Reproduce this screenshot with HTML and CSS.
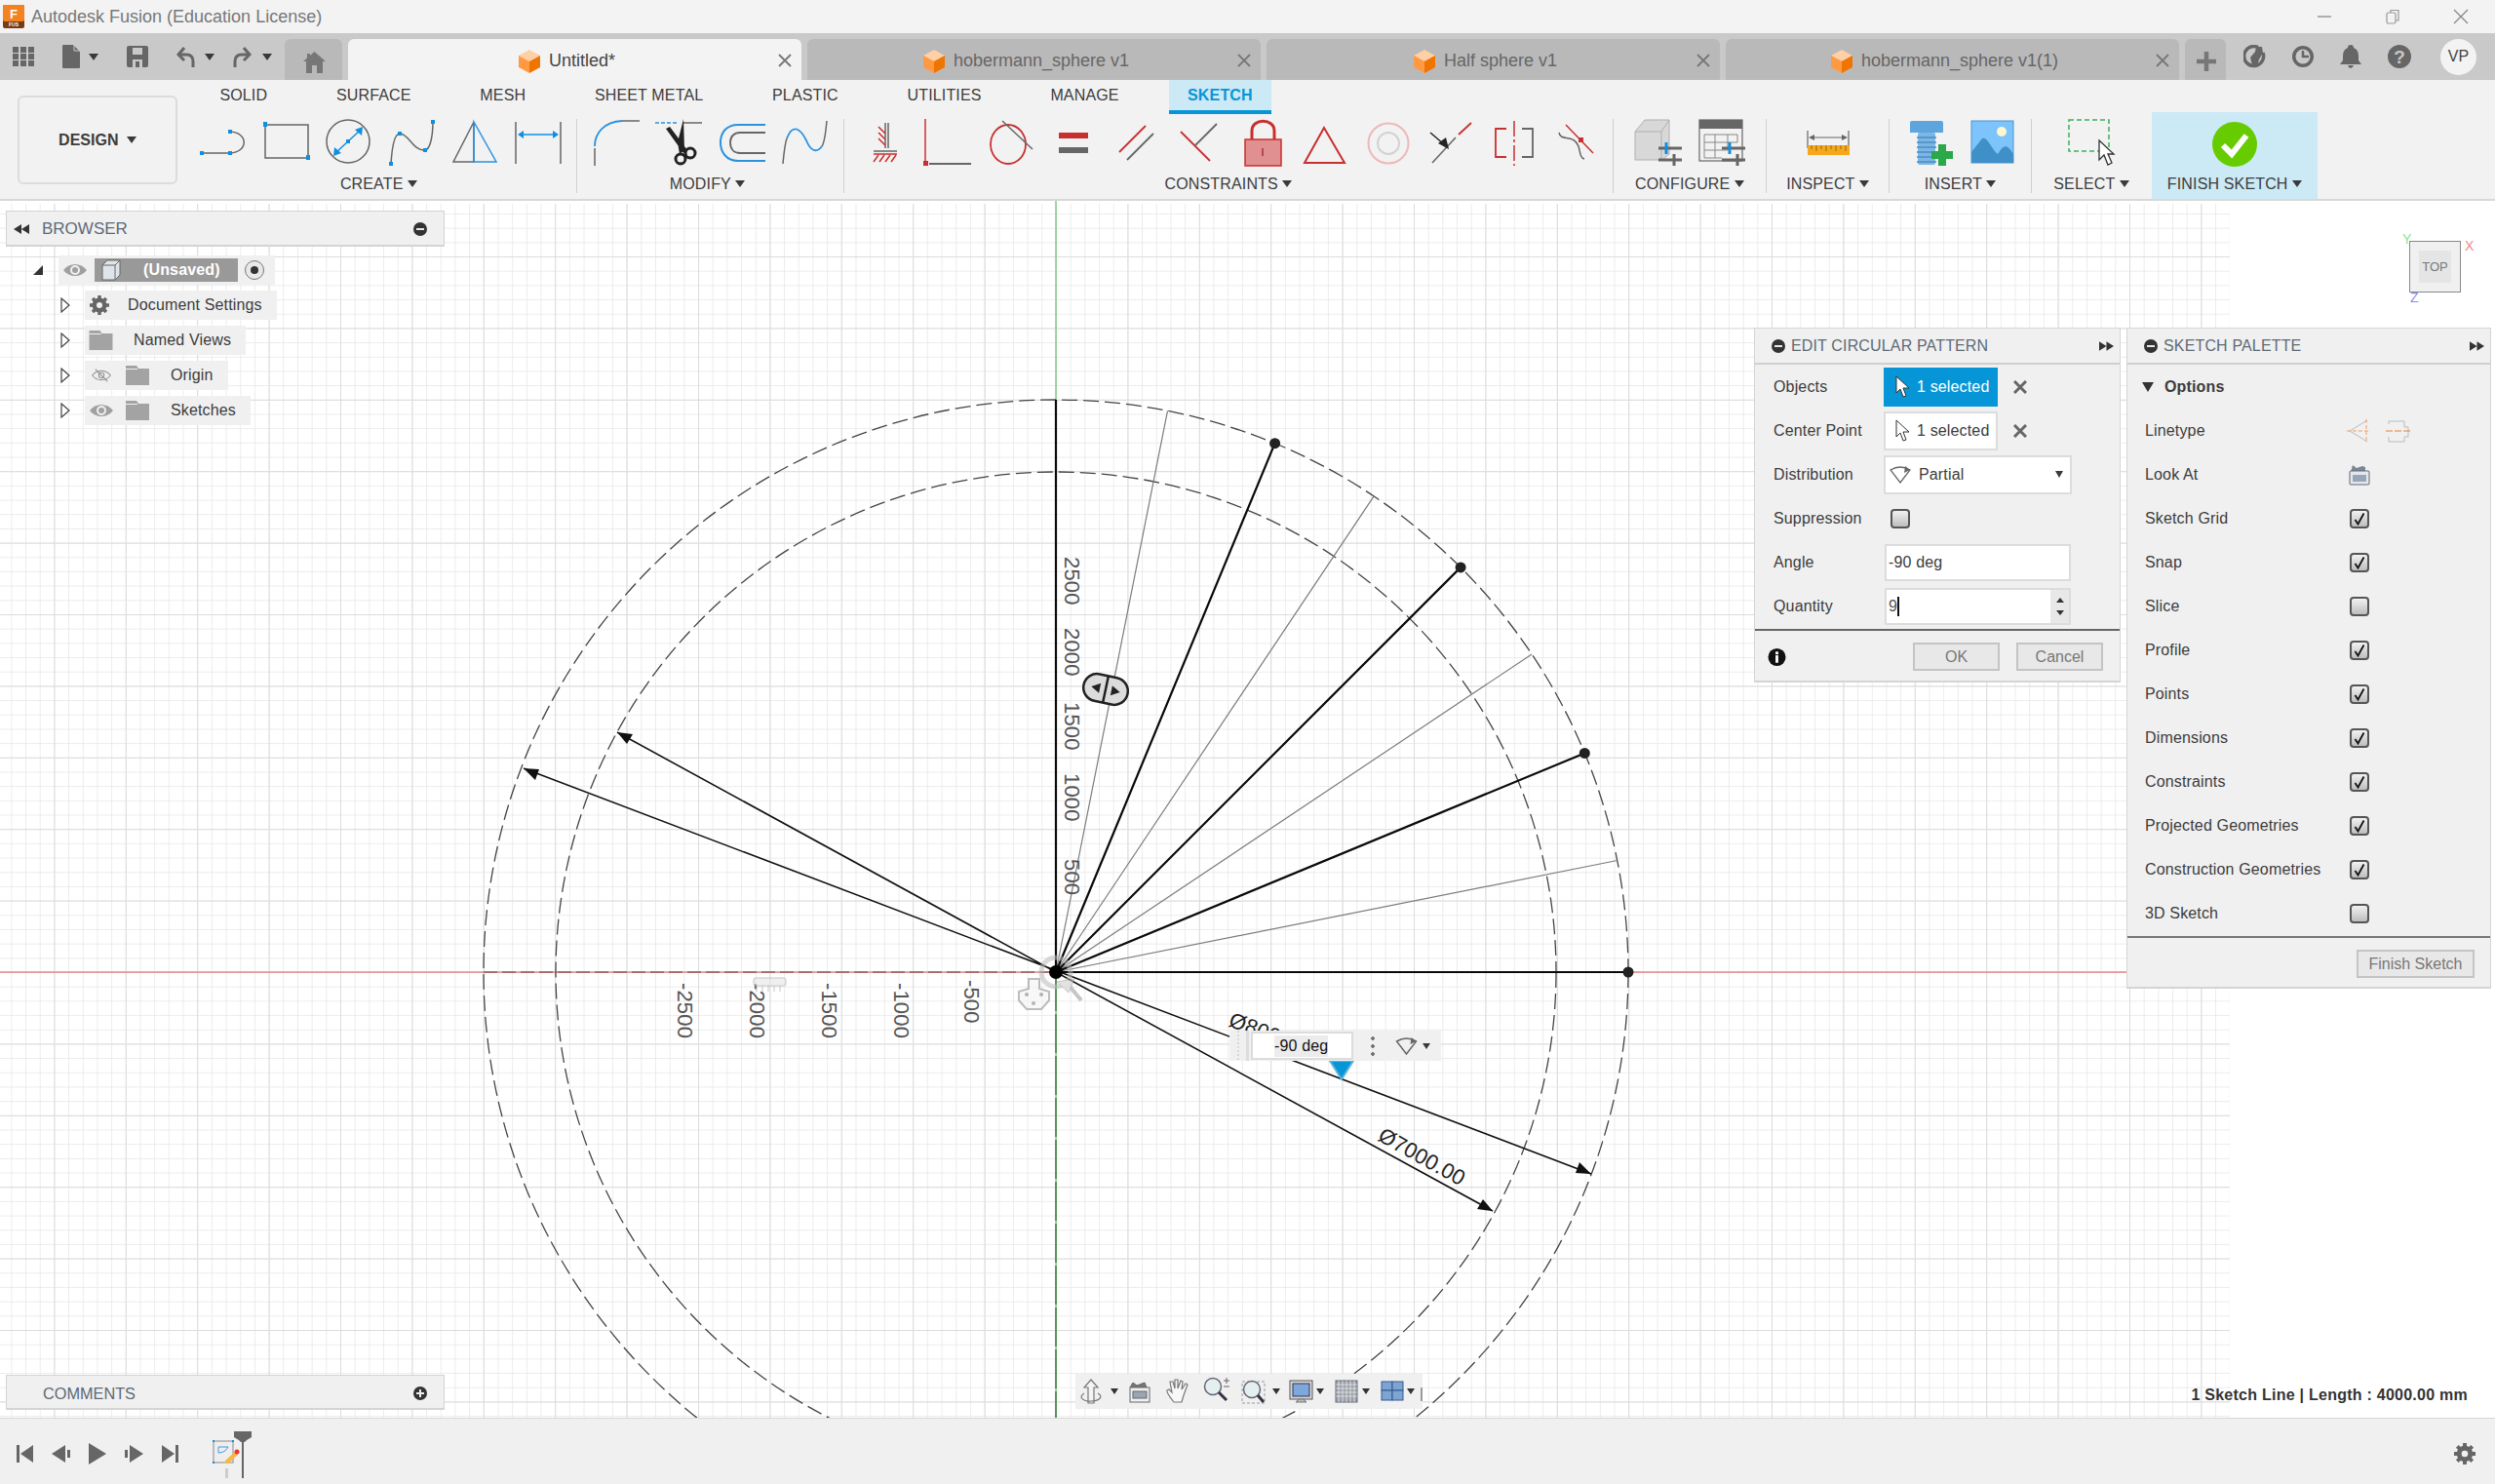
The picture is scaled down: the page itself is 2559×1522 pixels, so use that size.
FILE: index.html
```html
<!DOCTYPE html>
<html lang="en">
<head>
<meta charset="utf-8">
<title>Autodesk Fusion (Education License)</title>
<link rel="stylesheet" href="styles.css">
</head>
<body>
<svg class="defs" aria-hidden="true">
  <symbol id="cube" viewBox="0 0 22 24"><polygon points="11,0 22,6 11,12 0,6" fill="#ffcfa6"/><polygon points="0,6 11,12 11,24 0,18" fill="#ff9a42"/><polygon points="22,6 11,12 11,24 22,18" fill="#f07400"/></symbol>
  <symbol id="eye" viewBox="0 0 24 14"><path d="M0 7C6 -1 18 -1 24 7C18 15 6 15 0 7Z" fill="#a0a0a0"/><circle cx="12" cy="7" r="5" fill="#f0f0f0"/><circle cx="12" cy="7" r="3" fill="#a0a0a0"/></symbol>
  <symbol id="folder" viewBox="0 0 24 20"><path d="M0 0H11L13 3H24V20H0Z" fill="#a3a3a3"/><path d="M0 3.5H12" stroke="#f0f0f0" stroke-width="1"/></symbol>
  <symbol id="caret" viewBox="0 0 10 16"><path d="M1 1L9 8L1 15Z" fill="#fff" stroke="#444" stroke-width="1.2"/></symbol>
  <symbol id="cursor" viewBox="0 0 16 24"><path d="M2 1V18L6 14L9 22L12 21L9 13H15Z" fill="currentColor" stroke="#333" stroke-width="1"/></symbol>
  <symbol id="dblright" viewBox="0 0 16 12"><path d="M0 1L8 6L0 11ZM8 1L16 6L8 11Z" fill="#333"/></symbol>
  <symbol id="check" viewBox="0 0 14 14"><path d="M2.500 8L5.500 12.500L11.500 1.500" fill="none" stroke="#111" stroke-width="1.800"/></symbol>
  <symbol id="minusc" viewBox="0 0 14 14"><circle cx="7" cy="7" r="7" fill="#333"/><rect x="3" y="6" width="8" height="2" fill="#e8e8e8"/></symbol>
  <symbol id="sliders" viewBox="0 0 24 24"><path d="M0 6H24M0 18H24" stroke="#666" stroke-width="3"/><path d="M8 0V12" stroke="#0f8fe0" stroke-width="3"/><path d="M16 12V24" stroke="#666" stroke-width="3"/></symbol>
</svg>

<header class="titlebar">
  <svg class="appicon" viewBox="0 0 22 24"><rect width="22" height="24" rx="2" fill="#7a3b10"/><rect width="22" height="17" rx="2" fill="#f58220"/><text x="11" y="14" class="appicon-f">F</text><text x="11" y="22" class="appicon-s">FUS</text></svg>
  <span class="apptitle">Autodesk Fusion (Education License)</span>
  <div class="winctl">
    <svg width="16" height="16" viewBox="0 0 16 16"><path d="M1 8H15" stroke="#999" stroke-width="1.500"/></svg>
    <svg width="16" height="16" viewBox="0 0 16 16"><rect x="2" y="4" width="9" height="11" rx="1.500" fill="none" stroke="#999" stroke-width="1.200"/><path d="M6 4V1.500H14V12H11" fill="none" stroke="#999" stroke-width="1.200"/></svg>
    <svg width="16" height="16" viewBox="0 0 16 16"><path d="M1 1L15 15M15 1L1 15" stroke="#888" stroke-width="1.300"/></svg>
  </div>
</header>

<nav class="tabbar">
  <div class="qat">
    <svg class="qat-grid" width="22" height="20" viewBox="0 0 22 20"><path fill="#666" d="M0 0h6v6H0zM8 0h6v6H8zM16 0h6v6h-6zM0 7h6v6H0zM8 7h6v6H8zM16 7h6v6h-6zM0 14h6v6H0zM8 14h6v6H8zM16 14h6v6h-6z"/></svg>
    <svg class="qat-file" width="18" height="24" viewBox="0 0 18 24"><path fill="#666" d="M1 0H11L18 7V23Q18 24 17 24H1Q0 24 0 23V1Q0 0 1 0Z"/><path d="M12 0V6H18" fill="none" stroke="#c9c9c9" stroke-width="1"/></svg>
    <i class="tri qat-tri1"></i>
    <svg class="qat-save" width="22" height="22" viewBox="0 0 22 22"><path fill="#666" d="M2 0H20Q22 0 22 2V20Q22 22 20 22H2Q0 22 0 20V2Q0 0 2 0Z"/><path fill="#c9c9c9" d="M6 2H16V9H6ZM6 14H16V22H6Z"/><rect x="9" y="16" width="4" height="6" fill="#666"/></svg>
    <svg class="qat-undo" width="19" height="22" viewBox="0 0 19 22"><path d="M8 2L2 9L8 15" fill="none" stroke="#666" stroke-width="3"/><path d="M3 9H10Q17 9 17 16V22" fill="none" stroke="#666" stroke-width="3"/></svg>
    <i class="tri qat-tri2"></i>
    <svg class="qat-redo" width="19" height="22" viewBox="0 0 19 22"><path d="M11 2L17 9L11 15" fill="none" stroke="#666" stroke-width="3"/><path d="M16 9H9Q2 9 2 16V22" fill="none" stroke="#666" stroke-width="3"/></svg>
    <i class="tri qat-tri3"></i>
  </div>
  <div class="hometab"><svg width="23" height="22" viewBox="0 0 23 22"><path fill="#777" d="M11.500 0L23 10H20V22H14V14H9V22H3V10H0L4 6.500V2H7V4Z"/></svg></div>
  <div class="doctab active"><svg class="tabcube"><use href="#cube"/></svg><span class="doctab-name">Untitled*</span><svg class="tabclose" viewBox="0 0 14 14"><path d="M1 1L13 13M13 1L1 13" stroke="#777" stroke-width="1.800"/></svg></div>
  <div class="doctab"><svg class="tabcube"><use href="#cube"/></svg><span class="doctab-name">hobermann_sphere v1</span><svg class="tabclose" viewBox="0 0 14 14"><path d="M1 1L13 13M13 1L1 13" stroke="#777" stroke-width="1.800"/></svg></div>
  <div class="doctab"><svg class="tabcube"><use href="#cube"/></svg><span class="doctab-name">Half sphere v1</span><svg class="tabclose" viewBox="0 0 14 14"><path d="M1 1L13 13M13 1L1 13" stroke="#777" stroke-width="1.800"/></svg></div>
  <div class="doctab"><svg class="tabcube"><use href="#cube"/></svg><span class="doctab-name">hobermann_sphere v1(1)</span><svg class="tabclose" viewBox="0 0 14 14"><path d="M1 1L13 13M13 1L1 13" stroke="#777" stroke-width="1.800"/></svg></div>
  <div class="plustab"><svg width="20" height="20" viewBox="0 0 20 20"><path d="M10 0V20M0 10H20" stroke="#777" stroke-width="4.500"/></svg></div>
  <div class="tabtools">
    <svg width="24" height="24" viewBox="0 0 24 24"><path d="M15 2.500A10 10 0 1 0 20 8" fill="none" stroke="#666" stroke-width="3.500"/><path d="M7 13L12 7L13 2L19 2L20 8L16 15L14 22L9 21Z" fill="#666"/></svg>
    <svg width="24" height="24" viewBox="0 0 24 24"><circle cx="12" cy="12" r="11" fill="#666"/><circle cx="12" cy="12" r="7.500" fill="#c9c9c9"/><path d="M12 6V12H18" fill="none" stroke="#666" stroke-width="2.500"/></svg>
    <svg width="22" height="24" viewBox="0 0 22 24"><path fill="#666" d="M11 0Q14 0 14 3Q19 5 19 11V16L22 20H0L3 16V11Q3 5 8 3Q8 0 11 0ZM8 21H14Q13 24 11 24Q9 24 8 21Z"/></svg>
    <svg width="24" height="24" viewBox="0 0 24 24"><circle cx="12" cy="12" r="12" fill="#666"/><text x="12" y="19" class="helpq">?</text></svg>
    <span class="avatar">VP</span>
  </div>
</nav>

<section class="toolbar">
  <button class="designbtn">DESIGN <i class="tri"></i></button>
  <div class="toolcol">
    <div class="wstabs">
      <span class="wstab">SOLID</span><span class="wstab">SURFACE</span><span class="wstab">MESH</span><span class="wstab">SHEET METAL</span><span class="wstab">PLASTIC</span><span class="wstab">UTILITIES</span><span class="wstab">MANAGE</span><span class="wstab current">SKETCH</span>
    </div>
    <div class="groups">
      <div class="group g-create">
        <div class="icons">
          <svg class="ti" viewBox="0 0 48 48"><path d="M2 35H31M31 13C50 14 50 34 31 35" fill="none" stroke="#666" stroke-width="1.500"/><path d="M0 33h4v4H0zM29 33h4v4h-4zM29 11h4v4h-4z" fill="#0f8fe0"/></svg>
          <svg class="ti" viewBox="0 0 48 48"><rect x="2" y="6" width="44" height="34" fill="none" stroke="#666" stroke-width="1.500"/><path d="M0 3h4v5H0zM44 37h4v5h-4z" fill="#0f8fe0"/></svg>
          <svg class="ti" viewBox="0 0 48 48"><ellipse cx="23" cy="23" rx="22" ry="22" fill="none" stroke="#666" stroke-width="1.500"/><path d="M10 35L36 11" stroke="#0f8fe0" stroke-width="1.500"/><path d="M8 38L9 29L16 35ZM38 8L37 17L30 11Z" fill="#0f8fe0"/><rect x="21" y="21" width="4" height="4" fill="#0f8fe0"/></svg>
          <svg class="ti" viewBox="0 0 48 48"><path d="M2 46C3 30 5 15 11 15C20 15 25 33 37 32C43 31 45 15 45 2" fill="none" stroke="#666" stroke-width="1.500"/><path d="M0 44h4v4H0zM9 13h4v4H9zM35 30h4v4h-4zM43 1h4v4h-4z" fill="#0f8fe0"/></svg>
          <svg class="ti" viewBox="0 0 48 48"><path d="M23 3V44H2Z" fill="none" stroke="#666" stroke-width="1.500"/><path d="M23 3V44H46Z" fill="none" stroke="#2b92e0" stroke-width="1.500"/></svg>
          <svg class="ti" viewBox="0 0 48 48"><path d="M1 3V46M47 3V46" stroke="#666" stroke-width="1.500"/><path d="M6 16H42" stroke="#0f8fe0" stroke-width="1.500"/><path d="M3 16L9 12V20ZM45 16L39 12V20Z" fill="#0f8fe0"/></svg>
        </div>
        <div class="glabel pull">CREATE <i class="tri"></i></div>
      </div>
      <div class="group g-modify">
        <div class="icons">
          <svg class="ti" viewBox="0 0 48 48"><path d="M2 48V30M30 2H48" stroke="#666" stroke-width="1.500" fill="none"/><path d="M2 28C2 14 12 3 30 2" fill="none" stroke="#2b92e0" stroke-width="1.800"/></svg>
          <svg class="ti" viewBox="0 0 48 48"><path d="M0 4H24" stroke="#2b92e0" stroke-width="1.500" stroke-dasharray="4 2"/><path d="M28 4H48" stroke="#666" stroke-width="1.500"/><path d="M11 10L15 8L33 32L29 35ZM29 0L30 32L25 36L23 24Z" fill="#222"/><circle cx="26" cy="41" r="5" fill="none" stroke="#222" stroke-width="3"/><circle cx="36" cy="35" r="5" fill="none" stroke="#222" stroke-width="3"/></svg>
          <svg class="ti" viewBox="0 0 48 48"><path d="M48 6H20C8 6 2 14 2 24C2 34 8 43 20 43H48" fill="none" stroke="#2b92e0" stroke-width="2"/><path d="M48 14H22C16 14 12 18 12 24C12 31 16 35 22 35H48" fill="none" stroke="#666" stroke-width="1.800"/></svg>
          <svg class="ti" viewBox="0 0 48 48"><path d="M2 46C3 35 4 25 6 20M42 28C45 24 46 12 47 2" fill="none" stroke="#666" stroke-width="1.500"/><path d="M6 20C12 4 20 10 26 22C30 32 36 36 42 28" fill="none" stroke="#2b92e0" stroke-width="1.800"/></svg>
        </div>
        <div class="glabel pull-m">MODIFY <i class="tri"></i></div>
      </div>
      <div class="group g-constraints">
        <div class="icons wide">
          <svg class="ti" viewBox="0 0 48 48"><path d="M24 4V30M27 4V30M12 33H36" stroke="#666" stroke-width="1.500"/><path d="M12 36H36M17 8L24 15M17 14L24 21M17 20L24 27M17 37L12 44M23 37L18 44M29 37L24 44M35 37L30 44" stroke="#c8302f" stroke-width="1.500"/></svg>
          <svg class="ti" viewBox="0 0 48 48"><path d="M1 0V44" stroke="#c8302f" stroke-width="1.500"/><path d="M5 46H48" stroke="#666" stroke-width="2"/><rect x="-1" y="43" width="5" height="5" fill="#c8302f"/></svg>
          <svg class="ti" viewBox="0 0 48 48"><ellipse cx="21" cy="26" rx="18" ry="20" fill="none" stroke="#c8302f" stroke-width="1.800"/><path d="M15 2L46 31" stroke="#666" stroke-width="1.500"/></svg>
          <svg class="ti" viewBox="0 0 48 48"><rect x="9" y="14" width="30" height="6" fill="#c8302f"/><rect x="9" y="29" width="30" height="6" fill="#666"/></svg>
          <svg class="ti" viewBox="0 0 48 48"><path d="M33 7L6 34" stroke="#c8302f" stroke-width="1.800"/><path d="M41 15L14 42" stroke="#666" stroke-width="1.800"/></svg>
          <svg class="ti" viewBox="0 0 48 48"><path d="M5 13L35 43" stroke="#c8302f" stroke-width="1.800"/><path d="M42 5L20 27" stroke="#666" stroke-width="1.800"/></svg>
          <svg class="ti" viewBox="0 0 48 48"><path d="M13 22V12C13 -1 36 -1 36 12V22" fill="none" stroke="#c8302f" stroke-width="3"/><rect x="6" y="21" width="37" height="27" fill="#e09090" stroke="#c8302f" stroke-width="1.500"/><path d="M24 30V38" stroke="#a33" stroke-width="1.500"/></svg>
          <svg class="ti" viewBox="0 0 48 48"><path d="M23 9L44 45H3Z" fill="none" stroke="#c8302f" stroke-width="2"/></svg>
          <svg class="ti" viewBox="0 0 48 48"><circle cx="24" cy="25" r="20.500" fill="none" stroke="#eeb8b8" stroke-width="2"/><circle cx="24" cy="25" r="11" fill="none" stroke="#d2d2d2" stroke-width="2"/></svg>
          <svg class="ti" viewBox="0 0 48 48"><path d="M5 45L29 19" stroke="#666" stroke-width="1.500"/><path d="M32 16L45 4" stroke="#c8302f" stroke-width="1.800"/><path d="M3 14L17 26" stroke="#222" stroke-width="1.500"/><path d="M22 31L11 25L19 19Z" fill="#222"/></svg>
          <svg class="ti" viewBox="0 0 48 48"><path d="M24 2V48" stroke="#c8302f" stroke-width="1.500" stroke-dasharray="16 3 3 3"/><path d="M16 10H5V39H16" fill="none" stroke="#c8302f" stroke-width="1.800"/><path d="M32 10H43V39H32" fill="none" stroke="#666" stroke-width="1.800"/></svg>
          <svg class="ti" viewBox="0 0 48 48"><path d="M13 6L41 35" stroke="#c8302f" stroke-width="1.500"/><path d="M6 14C8 24 20 14 26 28C28 36 28 40 32 41" fill="none" stroke="#666" stroke-width="1.500"/><rect x="26" y="19" width="5" height="5" fill="#c8302f"/></svg>
        </div>
        <div class="glabel">CONSTRAINTS <i class="tri"></i></div>
      </div>
      <div class="group g-configure">
        <div class="icons">
          <svg class="ti" viewBox="0 0 48 48"><path d="M0 13L10 1H35V36L28 42H0Z" fill="#d8d8d8" stroke="#b0b0b0"/><path d="M0 13H27L35 1M27 13V42" fill="none" stroke="#b0b0b0"/><use href="#sliders" x="24" y="24" width="24" height="24"/></svg>
          <svg class="ti" viewBox="0 0 48 48"><rect x="1" y="1" width="44" height="42" fill="#f2f2f2" stroke="#666" stroke-width="1.200"/><rect x="1" y="1" width="44" height="9" fill="#666"/><path d="M6 16H40M6 24H40M6 32H30M6 40H24M6 16V40M17 16V40M30 16V32M40 16V24" stroke="#888" stroke-width="1" fill="none"/><use href="#sliders" x="24" y="24" width="24" height="24"/></svg>
        </div>
        <div class="glabel">CONFIGURE <i class="tri"></i></div>
      </div>
      <div class="group g-inspect">
        <div class="icons">
          <svg class="ti" viewBox="0 0 48 48"><path d="M3 12V30M45 12V30" stroke="#666" stroke-width="1.200"/><path d="M6 19H42" stroke="#666" stroke-width="1.200"/><path d="M4 19L10 16V22ZM44 19L38 16V22Z" fill="#666"/><rect x="3" y="27" width="43" height="10" fill="#f5a81c"/><path d="M7 27V31M12 27V33M17 27V31M22 27V33M27 27V31M32 27V33M37 27V31M42 27V33" stroke="#9a6a10"/></svg>
        </div>
        <div class="glabel">INSPECT <i class="tri"></i></div>
      </div>
      <div class="group g-insert">
        <div class="icons">
          <svg class="ti" viewBox="0 0 48 48"><path d="M4 2H34Q36 2 36 4V14H2V4Q2 2 4 2Z" fill="#5da5dc"/><rect x="10" y="14" width="18" height="33" rx="2" fill="#7cb6e4"/><path d="M9 19H29M9 24H29M9 29H29M9 34H29M9 39H29M9 44H29" stroke="#4a8fc4" stroke-width="1.500"/><path d="M31 26H39V33H46V41H39V48H31V41H24V33H31Z" fill="#2aa84a"/></svg>
          <svg class="ti" viewBox="0 0 48 48"><rect x="3" y="2" width="43" height="43" fill="#7cc4fb" stroke="#4a94d0"/><path d="M3 34L14 20C20 18 24 32 30 36C34 30 38 22 46 36V45H3Z" fill="#3f8fc9"/><ellipse cx="34" cy="13" rx="5" ry="5" fill="#fdf8d0"/></svg>
        </div>
        <div class="glabel">INSERT <i class="tri"></i></div>
      </div>
      <div class="group g-select">
        <div class="icons">
          <svg class="ti" viewBox="0 0 48 48"><rect x="1" y="1" width="41" height="32" fill="none" stroke="#3fae5a" stroke-width="1.500" stroke-dasharray="5 3"/><path d="M32 22V42L37 37L41 47L45 45L41 36H47Z" fill="#fff" stroke="#333" stroke-width="1.300"/></svg>
        </div>
        <div class="glabel">SELECT <i class="tri"></i></div>
      </div>
      <div class="group g-finish">
        <div class="icons">
          <svg class="ti" viewBox="0 0 48 48"><circle cx="24" cy="24" r="23" fill="#66cc00"/><path d="M12 25L21 34L36 15" fill="none" stroke="#fff" stroke-width="6"/></svg>
        </div>
        <div class="glabel">FINISH SKETCH <i class="tri"></i></div>
      </div>
    </div>
  </div>
</section>

<main class="canvas">
  <svg class="scene" viewBox="0 206 2559 1248" preserveAspectRatio="none">
    <defs>
      <pattern id="minor" x="1083" y="997" width="14.68" height="14.68" patternUnits="userSpaceOnUse"><path d="M0 0H14.680M0 0V14.680" fill="none" stroke="#e6e6e6" stroke-width="1.500"/></pattern>
      <pattern id="major" x="1083" y="997" width="73.4" height="73.4" patternUnits="userSpaceOnUse"><path d="M0 0H73.400M0 0V73.400" fill="none" stroke="#dcdcdc" stroke-width="2"/></pattern>
    </defs>
    <rect x="0" y="206" width="2559" height="1248" fill="#fff"/>
    <rect x="0" y="209" width="2287" height="1245" fill="url(#minor)"/>
    <rect x="0" y="209" width="2287" height="1245" fill="url(#major)"/>
    <path d="M0 997H2181" stroke="#e88686" stroke-width="1.500"/>
    <path d="M1083 206V1454" stroke="#7fcf7f" stroke-width="1.500"/>
    <path d="M496 997H1083" stroke="#6b3f3f" stroke-width="1.200" stroke-dasharray="14 5"/>
    <path d="M1083 997V1454" stroke="#2c6a2c" stroke-width="1.200" stroke-dasharray="40 3"/>
    <circle cx="1083" cy="997" r="587" fill="none" stroke="#444" stroke-width="1.300" stroke-dasharray="16 6"/>
    <circle cx="1083" cy="997" r="513" fill="none" stroke="#444" stroke-width="1.300" stroke-dasharray="16 6"/>
    <path d="M1083 997L1658.700 882.500M1083 997L1571.100 670.900M1083 997L1409.100 508.900M1083 997L1197.500 421.300" stroke="#7c7c7c" stroke-width="1.200"/>
    <path d="M1083 997H1670M1083 997L1625.300 772.400M1083 997L1498.100 581.900M1083 997L1307.600 454.700M1083 997V410" stroke="#0a0a0a" stroke-width="2.200"/>
    <path d="M537 788L1632 1204M633 751L1531 1242" stroke="#111" stroke-width="1.600"/>
    <path d="M537 788L553 789L549 800ZM1632 1204L1616 1203L1620 1192ZM633 751L649 753L643 763ZM1531 1242L1515 1240L1521 1230Z" fill="#111"/>
    <g fill="#222"><circle cx="1670" cy="997" r="5.500"/><circle cx="1625.300" cy="772.400" r="5.500"/><circle cx="1498.100" cy="581.900" r="5.500"/><circle cx="1307.600" cy="454.700" r="5.500"/></g>
    <text class="ax" transform="translate(1092 571) rotate(90)">2500</text>
    <text class="ax" transform="translate(1092 644) rotate(90)">2000</text>
    <text class="ax" transform="translate(1092 720) rotate(90)">1500</text>
    <text class="ax" transform="translate(1092 793) rotate(90)">1000</text>
    <text class="ax" transform="translate(1092 881) rotate(90)">500</text>
    <text class="ax" transform="translate(695 1008) rotate(90)">-2500</text>
    <text class="ax" transform="translate(769 1008) rotate(90)">-2000</text>
    <text class="ax" transform="translate(843 1008) rotate(90)">-1500</text>
    <text class="ax" transform="translate(917 1008) rotate(90)">-1000</text>
    <text class="ax" transform="translate(989 1005) rotate(90)">-500</text>
    <text class="dim" transform="translate(1412 1169) rotate(29)">Ø7000.00</text>
    <text class="dim" transform="translate(1259 1052) rotate(20.600)">Ø8000.00</text>
    <g opacity=".55">
      <rect x="773" y="1003" width="33" height="8" rx="2" fill="#e4e4e4" stroke="#999"/>
      <path d="M776 1011V1017M782 1011V1017M788 1011V1017M794 1011V1017M800 1011V1017" stroke="#999"/>
      <circle cx="1083" cy="997" r="15" fill="none" stroke="#bbb" stroke-width="5"/>
      <path d="M1095 1009L1109 1026" stroke="#999" stroke-width="4"/>
      <path d="M1084 1007L1102 1004L1096 1018Z" fill="#ccc" stroke="#999"/>
      <path d="M1045 1017V1026L1053 1035H1068L1076 1026V1017L1066 1014V1004H1055V1014Z" fill="#f4f4f4" stroke="#888" stroke-width="2"/>
      <circle cx="1053" cy="1020" r="2" fill="#777"/><circle cx="1068" cy="1020" r="2" fill="#777"/><circle cx="1060" cy="1029" r="2" fill="#777"/>
    </g>
    <circle cx="1083" cy="997" r="7" fill="#000"/>
    <g transform="translate(1134 707) rotate(12)">
      <rect x="-23" y="-14" width="46" height="28" rx="14" fill="#dcdcdc" stroke="#222" stroke-width="2.500"/>
      <path d="M0 -14V14" stroke="#222" stroke-width="2.500"/>
      <path d="M-15 0L-6 -5V5ZM15 0L6 -5V5Z" fill="#222"/>
    </g>
    <path d="M1364 1088H1388L1376 1107Z" fill="#0696d7" stroke="#5fb4dc" stroke-width="2"/>
  </svg>

  <aside class="side browserp">
    <svg class="rew" viewBox="0 0 16 12"><path d="M16 1L8 6L16 11ZM8 1L0 6L8 11Z" fill="#333"/></svg>
    <span class="side-title">BROWSER</span>
    <svg class="sidebtn"><use href="#minusc"/></svg>
  </aside>

  <div class="tree">
    <div class="tnode">
      <svg class="rootcaret" viewBox="0 0 10 10"><path d="M10 0V10H0Z" fill="#333"/></svg>
      <div class="strip root">
        <svg class="ic-eye"><use href="#eye"/></svg>
        <div class="selblock"><svg class="rootcube" viewBox="0 0 20 22"><path d="M1 6L6 1H19V16L14 21H1Z" fill="#dfe3ea" stroke="#666"/><path d="M1 6H14L19 1M14 6V21" fill="none" stroke="#666"/></svg><span>(Unsaved)</span></div>
        <svg class="radio" viewBox="0 0 20 20"><circle cx="10" cy="10" r="9.500" fill="#e8e8e8" stroke="#777"/><circle cx="10" cy="10" r="4" fill="#333"/></svg>
      </div>
    </div>
    <div class="tnode child">
      <svg class="caret"><use href="#caret"/></svg>
      <div class="strip"><svg class="ic-gear" viewBox="0 0 20 20"><circle cx="10" cy="10" r="5.500" fill="none" stroke="#666" stroke-width="4"/><path d="M10 0V20M0 10H20M3 3L17 17M17 3L3 17" stroke="#666" stroke-width="3.500"/><circle cx="10" cy="10" r="3" fill="#f0f0f0"/></svg><span class="tlabel l-doc">Document Settings</span></div>
    </div>
    <div class="tnode child">
      <svg class="caret"><use href="#caret"/></svg>
      <div class="strip"><svg class="ic-folder"><use href="#folder"/></svg><span class="tlabel l-named">Named Views</span></div>
    </div>
    <div class="tnode child">
      <svg class="caret"><use href="#caret"/></svg>
      <div class="strip"><svg class="ic-eye2" viewBox="0 0 24 18"><path d="M0 9C6 1 18 1 24 9C18 17 6 17 0 9Z" fill="none" stroke="#999" stroke-width="1.500"/><circle cx="12" cy="9" r="3.500" fill="none" stroke="#999" stroke-width="1.500"/><path d="M4 1L20 17" stroke="#999" stroke-width="1.500"/></svg><svg class="ic-folder2"><use href="#folder"/></svg><span class="tlabel l-origin">Origin</span></div>
    </div>
    <div class="tnode child">
      <svg class="caret"><use href="#caret"/></svg>
      <div class="strip"><svg class="ic-eye2"><use href="#eye"/></svg><svg class="ic-folder2"><use href="#folder"/></svg><span class="tlabel l-origin">Sketches</span></div>
    </div>
  </div>

  <aside class="side commentsp">
    <span class="side-title comments">COMMENTS</span>
    <svg class="sidebtn" viewBox="0 0 14 14"><circle cx="7" cy="7" r="7" fill="#333"/><path d="M3 7H11M7 3V11" stroke="#eee" stroke-width="2"/></svg>
  </aside>

  <svg class="viewcube" viewBox="0 0 72 70">
    <text x="-1" y="8" class="vc vc-y">Y</text>
    <rect x="6.500" y="5.500" width="52" height="52" fill="#f0f0f0" stroke="#888"/>
    <rect x="16" y="15" width="33" height="33" fill="#e5e5e5"/>
    <text x="32.500" y="36" class="vc vc-top">TOP</text>
    <text x="63" y="15" class="vc vc-x">X</text>
    <text x="7" y="68" class="vc vc-z">Z</text>
  </svg>

  <section class="dialog editp">
    <header class="dlg-head"><svg class="dlg-min"><use href="#minusc"/></svg><span class="dlg-title">EDIT CIRCULAR PATTERN</span><svg class="dlg-more"><use href="#dblright"/></svg></header>
    <div class="dlg-body">
      <div class="frow"><label>Objects</label><div class="selbtn blue"><svg class="cur"><use href="#cursor"/></svg>1 selected</div><svg class="xbtn" viewBox="0 0 14 14"><path d="M1 1L13 13M13 1L1 13" stroke="#666" stroke-width="3"/></svg></div>
      <div class="frow"><label>Center Point</label><div class="selbtn"><svg class="cur"><use href="#cursor"/></svg>1 selected</div><svg class="xbtn" viewBox="0 0 14 14"><path d="M1 1L13 13M13 1L1 13" stroke="#666" stroke-width="3"/></svg></div>
      <div class="frow"><label>Distribution</label><div class="sel"><svg class="partial" viewBox="0 0 22 18"><path d="M1 4Q11 -2 21 4L11 17Z" fill="none" stroke="#666" stroke-width="1.300"/><path d="M16 0L21 4L15 7Z" fill="#666"/></svg><span>Partial</span><i class="tri"></i></div></div>
      <div class="frow"><label>Suppression</label><div class="cb cb-supp"></div></div>
      <div class="frow"><label>Angle</label><div class="inp">-90 deg</div></div>
      <div class="frow"><label>Quantity</label><div class="inp qty"><span class="qtyval">9</span><i class="caretbar"></i><div class="spin"><span class="up"></span><span class="dn"></span></div></div></div>
    </div>
    <footer class="dlg-foot">
      <svg class="infoi" viewBox="0 0 20 20"><circle cx="10" cy="10" r="9.500" fill="#111"/><rect x="8.500" y="8" width="3" height="8" fill="#fff"/><rect x="8.500" y="4" width="3" height="3" fill="#fff"/></svg>
      <button class="btn">OK</button><button class="btn">Cancel</button>
    </footer>
  </section>

  <section class="dialog palette">
    <header class="dlg-head"><svg class="dlg-min"><use href="#minusc"/></svg><span class="dlg-title">SKETCH PALETTE</span><svg class="dlg-more"><use href="#dblright"/></svg></header>
    <div class="dlg-body">
      <div class="prow opts"><i class="opt-tri"></i><b>Options</b></div>
      <div class="prow"><label>Linetype</label><svg class="lt" viewBox="0 0 66 24"><path d="M21 1L3 12L21 23" fill="none" stroke="#bbb"/><path d="M0 12H24M20 0V24" stroke="#f0a060" stroke-dasharray="4 2"/><path d="M46 5V2H62V8H66V18H62V23H46V18" fill="none" stroke="#bbb" transform="translate(-3 0)"/><path d="M40 12H66" stroke="#f08030" stroke-dasharray="7 2"/></svg></div>
      <div class="prow"><label>Look At</label><svg class="la" viewBox="0 0 22 22"><path d="M2 8L4 1L8 4L14 2L17 3V8" fill="#7a8794"/><rect x="1" y="7" width="20" height="14" rx="1" fill="#e4e8ee" stroke="#667"/><rect x="4" y="11" width="14" height="7" fill="#98a6b8"/></svg></div>
      <div class="prow"><label>Sketch Grid</label><div class="cb"><svg><use href="#check"/></svg></div></div>
      <div class="prow"><label>Snap</label><div class="cb"><svg><use href="#check"/></svg></div></div>
      <div class="prow"><label>Slice</label><div class="cb"></div></div>
      <div class="prow"><label>Profile</label><div class="cb"><svg><use href="#check"/></svg></div></div>
      <div class="prow"><label>Points</label><div class="cb"><svg><use href="#check"/></svg></div></div>
      <div class="prow"><label>Dimensions</label><div class="cb"><svg><use href="#check"/></svg></div></div>
      <div class="prow"><label>Constraints</label><div class="cb"><svg><use href="#check"/></svg></div></div>
      <div class="prow"><label>Projected Geometries</label><div class="cb"><svg><use href="#check"/></svg></div></div>
      <div class="prow"><label>Construction Geometries</label><div class="cb"><svg><use href="#check"/></svg></div></div>
      <div class="prow"><label>3D Sketch</label><div class="cb"></div></div>
    </div>
    <footer class="dlg-foot end"><button class="btn fin">Finish Sketch</button></footer>
  </section>

  <div class="popup">
    <span class="grip"></span>
    <div class="popin"><span>-90 deg</span></div>
    <span class="dots"></span>
    <svg class="partial2" viewBox="0 0 22 18"><path d="M1 4Q11 -2 21 4L11 17Z" fill="none" stroke="#666" stroke-width="1.500"/><path d="M16 0L21 4L15 7Z" fill="#666"/></svg>
    <i class="tri"></i>
  </div>

  <svg class="navbar" viewBox="0 0 356 36">
    <g transform="translate(5 6)" fill="none" stroke="#777" stroke-width="1.200"><path d="M8 24V8H4L11 0L18 8H14V24Z" fill="#f4f4f4"/><path d="M4 14C-3 18 4 23 11 22C18 22 25 18 18 14"/></g>
    <path d="M36 15H44L40 21Z" fill="#333"/>
    <g transform="translate(55 8)" stroke="#666" fill="#eef0f3"><path d="M1 6L4 1L8 4L16 1L18 6" fill="#777"/><rect x="1" y="6" width="20" height="15"/><rect x="4" y="10" width="14" height="7" fill="#9aa6b4"/></g>
    <path d="M101 29C97 24 93 19 94 17L96 16L99 19L97 8L100 8L102 15L102 6L105 6L105 15L108 7L110 8L109 16L113 10L115 11L111 22L109 29Z" fill="#f8f8f8" stroke="#777" stroke-width="1.200"/>
    <g><circle cx="141" cy="13" r="8.500" fill="#e4f0f0" stroke="#667" stroke-width="1.500"/><path d="M147 19L155 27" stroke="#334" stroke-width="3"/><path d="M152 7H158M155 4V10M152 13H158" stroke="#666"/></g>
    <g><rect x="171" y="8" width="23" height="22" fill="none" stroke="#999" stroke-dasharray="3 2"/><circle cx="181" cy="16" r="8.500" fill="#e4f0f0" stroke="#667" stroke-width="1.500"/><path d="M187 22L193 29" stroke="#334" stroke-width="3"/></g>
    <path d="M202 15H210L206 21Z" fill="#333"/>
    <g><rect x="220" y="7" width="23" height="19" fill="#d8d8d8" stroke="#555"/><rect x="223" y="10" width="17" height="13" fill="#7ea8dc" stroke="#335"/><path d="M226 29H237L234 26H229Z" fill="#bbb" stroke="#777"/></g>
    <path d="M247 15H255L251 21Z" fill="#333"/>
    <g><rect x="267" y="7" width="22" height="22" fill="#9aa0aa" stroke="#667"/><path d="M270 7V29M274 7V29M278 7V29M282 7V29M286 7V29M267 11H289M267 15H289M267 19H289M267 23H289" stroke="#e8e8e8" stroke-width=".8"/></g>
    <path d="M294 15H302L298 21Z" fill="#333"/>
    <g fill="#7ea4d2" stroke="#345a90"><rect x="314" y="8" width="11" height="9"/><rect x="325" y="8" width="11" height="9"/><rect x="314" y="17" width="11" height="10"/><rect x="325" y="17" width="11" height="10"/></g>
    <path d="M340 15H348L344 21Z" fill="#333"/>
    <path d="M355 14V28" stroke="#444"/>
  </svg>

  <div class="status">1 Sketch Line | Length : 4000.00 mm</div>
</main>

<footer class="timeline">
  <div class="tcontrols">
    <svg width="18" height="18" viewBox="0 0 18 18"><path d="M0 0H3V18H0ZM17 0V18L4 9Z" fill="#666"/></svg>
    <svg width="20" height="18" viewBox="0 0 20 18"><path d="M14 0V18L0 9ZM16 5H19V13H16Z" fill="#666"/></svg>
    <svg width="18" height="22" viewBox="0 0 18 22"><path d="M0 0L18 11L0 22Z" fill="#666"/></svg>
    <svg width="20" height="18" viewBox="0 0 20 18"><path d="M6 0V18L20 9ZM1 5H4V13H1Z" fill="#666"/></svg>
    <svg width="18" height="18" viewBox="0 0 18 18"><path d="M18 0H15V18H18ZM1 0V18L14 9Z" fill="#666"/></svg>
  </div>
  <svg class="titem" viewBox="0 0 42 50">
    <path d="M1 10H21V32H1Z" fill="#eee" stroke="#aaa" stroke-width="1.500"/>
    <path d="M6 16H16M6 16V22C10 22 14 20 16 16" fill="none" stroke="#3b9ae0"/>
    <path d="M0 9h2v2H0zM20 9h2v2h-2zM0 31h2v2H0z" fill="#0f8fe0"/>
    <path d="M13 30L23 21L26 24L16 33L13 33Z" fill="#f5b942"/><circle cx="25" cy="21" r="2.500" fill="#e33"/>
    <rect x="13" y="38" width="3" height="10" fill="#ccc"/>
    <path d="M22 0H40V6L35 9L33 11H32V48H30V11H29L27 9L22 6Z" fill="#666"/>
  </svg>
  <svg class="tgear" viewBox="0 0 20 20"><circle cx="10" cy="10" r="5.500" fill="none" stroke="#666" stroke-width="4"/><path d="M10 0V20M0 10H20M3 3L17 17M17 3L3 17" stroke="#666" stroke-width="3.500"/><circle cx="10" cy="10" r="3" fill="#f0f0f0"/></svg>
</footer>
</body>
</html>
```

FILE: styles.css
```css
* { box-sizing: border-box; }
html, body { margin: 0; height: 100%; }
body {
  width: 2559px; height: 1522px; display: flex; flex-direction: column; overflow: hidden;
  font-family: "Liberation Sans", Arial, sans-serif; font-size: 16px; letter-spacing: .15px; color: #3c3c3c; background: #f2f2f2;
}
.defs { position: absolute; width: 0; height: 0; }
.tri { display: inline-block; width: 0; height: 0; border-left: 5px solid transparent; border-right: 5px solid transparent; border-top: 7px solid #3a3a3a; vertical-align: 2px; }

/* title bar */
.titlebar { height: 34px; flex: none; display: flex; align-items: center; background: #f3f3f3; padding-left: 3px; letter-spacing: 0; }
.appicon { width: 22px; height: 24px; }
.appicon-f { font: bold 13px "Liberation Sans", sans-serif; fill: #fff; text-anchor: middle; }
.appicon-s { font: bold 5px "Liberation Sans", sans-serif; fill: #fff; text-anchor: middle; }
.apptitle { margin-left: 7px; font-size: 18px; color: #787878; }
.winctl { margin-left: auto; display: flex; gap: 54px; padding-right: 27px; }

/* document tabs */
.tabbar { height: 48px; flex: none; display: flex; align-items: flex-end; background: #c9c9c9; letter-spacing: 0; }
.qat { width: 292px; height: 48px; flex: none; position: relative; }
.qat-grid, .qat-file, .qat-save, .qat-undo, .qat-redo, .qat-tri1, .qat-tri2, .qat-tri3 { position: absolute; }
.qat-grid { left: 13px; top: 14px; }
.qat-file { left: 64px; top: 12px; }
.qat-tri1 { left: 91px; top: 21px; }
.qat-save { left: 130px; top: 13px; }
.qat-undo { left: 181px; top: 13px; }
.qat-tri2 { left: 210px; top: 21px; }
.qat-redo { left: 239px; top: 13px; }
.qat-tri3 { left: 269px; top: 21px; }
.hometab { width: 59px; height: 42px; flex: none; background: #b9b9b9; border-radius: 6px 6px 0 0; display: flex; align-items: center; justify-content: center; padding-top: 6px; padding-left: 2px; }
.doctab { width: 465px; height: 42px; flex: none; margin-left: 6px; background: #b9b9b9; border-radius: 6px 6px 0 0; display: flex; align-items: center; justify-content: center; gap: 9px; padding: 3px 16px 0 0; position: relative; color: #666; font-size: 18px; }
.doctab.active { background: #f3f3f3; color: #444; }
.tabcube { width: 22px; height: 24px; }
.tabclose { position: absolute; right: 10px; top: 15px; width: 14px; height: 14px; }
.plustab { width: 42px; height: 42px; flex: none; margin-left: 6px; background: #b9b9b9; border-radius: 6px 6px 0 0; display: flex; align-items: center; justify-content: center; padding: 4px 0 0 2px; }
.tabtools { flex: 1; height: 48px; display: flex; align-items: center; }
.tabtools svg:nth-child(1) { margin-left: 18px; }
.tabtools svg:nth-child(2) { margin-left: 25px; }
.tabtools svg:nth-child(3) { margin-left: 26px; }
.tabtools svg:nth-child(4) { margin-left: 27px; }
.helpq { font: bold 19px "Liberation Sans", sans-serif; fill: #c9c9c9; text-anchor: middle; }
.avatar { margin-left: 30px; width: 37px; height: 37px; border-radius: 50%; background: #f3f3f3; display: flex; align-items: center; justify-content: center; font-size: 16px; color: #444; }

/* ribbon */
.toolbar { height: 124px; flex: none; display: flex; background: #f2f2f2; border-bottom: 2px solid #d8d8d8; padding-left: 18px; }
.designbtn { width: 164px; height: 91px; margin-top: 16px; background: #f2f2f2; border: 2px solid #dcdcdc; border-radius: 6px; font: bold 16px "Liberation Sans", sans-serif; color: #3c3c3c; }
.designbtn .tri { margin-left: 4px; }
.toolcol { margin-left: 8px; display: flex; flex-direction: column; }
.wstabs { height: 35px; display: flex; align-items: stretch; }
.wstab { padding: 0 35.400px 3px; display: flex; align-items: center; white-space: nowrap; }
.wstab.current { margin-left: 16px; padding: 0 19px 0; font-weight: bold; color: #0696d7; background: #cce9f6; border-bottom: 4px solid #0696d7; }
.groups { display: flex; align-items: flex-start; padding-left: 8px; }
.group { height: 76px; margin-top: 5px; border-right: 1px solid #d0d0d0; flex: none; }
.icons { display: flex; justify-content: center; height: 48px; gap: 16.500px; }
.ti { width: 48px; height: 48px; overflow: visible; flex: none; }
.glabel { margin-top: 8px; height: 22px; line-height: 22px; text-align: center; white-space: nowrap; }
.glabel .tri { vertical-align: 2px; }
.pull { padding-right: 12px; }
.pull-m { padding-right: 6px; }
.g-create { width: 394px; }
.g-create .icons { padding-right: 8px; }
.g-modify { width: 274px; }
.g-constraints { width: 789px; }
.g-constraints .icons { padding-left: 5px; }
.g-configure { width: 157px; }
.g-configure .icons { gap: 17px; }
.g-inspect { width: 126px; }
.g-insert { width: 146px; }
.g-insert .icons { gap: 14px; padding-left: 3px; }
.g-select { width: 122px; border-right: 0; }
.g-finish { width: 170px; height: 89px; margin-top: -2px; margin-left: 1px; padding-top: 9px; background: #cce9f6; border-right: 0; }
.g-finish .glabel { margin-top: 6px; }

/* canvas */
.canvas { flex: 1; position: relative; overflow: hidden; background: #fff; }
.scene { position: absolute; left: 0; top: 0; width: 2559px; height: 1248px; }
.ax { font-size: 22px; fill: #555; font-family: "Liberation Sans", sans-serif; }
.dim { font-size: 22px; fill: #222; font-family: "Liberation Sans", sans-serif; }

.side { position: absolute; left: 6px; width: 450px; height: 37px; background: #f0f0f0; border: 1px solid #d4d4d4; border-bottom-width: 2px; }
.browserp { top: 10px; }
.commentsp { top: 1204px; height: 36px; }
.side-title { position: absolute; left: 36px; top: 9px; font-size: 17px; line-height: 18px; color: #5e6a75; letter-spacing: 0; }
.side-title.comments { font-size: 16.300px; left: 37px; }
.rew { position: absolute; left: 7px; top: 12px; width: 16px; height: 12px; }
.sidebtn { position: absolute; right: 17px; top: 11px; width: 14px; height: 14px; }

.tree { position: absolute; left: 34px; top: 56px; display: flex; flex-direction: column; gap: 6px; }
.tnode { height: 30px; display: flex; align-items: center; }
.tnode.child { padding-left: 28px; }
.rootcaret { width: 10px; height: 10px; margin-right: 16px; }
.caret { width: 10px; height: 16px; margin-right: 15px; }
.strip { height: 30px; display: flex; align-items: center; background: #f0f0f0; padding: 0 15px 0 5px; white-space: nowrap; }
.strip.root { padding: 0 11px 0 5px; }
.ic-eye { width: 24px; height: 14px; }
.selblock { margin-left: 8px; width: 147px; height: 24px; background: #999; display: flex; align-items: center; color: #fff; font-weight: bold; }
.rootcube { width: 20px; height: 22px; margin-left: 7px; }
.selblock span { margin-left: 23px; }
.radio { width: 20px; height: 20px; margin-left: 7px; }
.ic-gear { width: 20px; height: 20px; }
.l-doc { margin-left: 19px; }
.ic-folder { width: 25px; height: 20px; margin-left: -1px; }
.l-named { margin-left: 21px; }
.ic-eye2 { width: 24px; height: 14px; }
.ic-folder2 { width: 24px; height: 20px; margin-left: 13px; }
.l-origin { margin-left: 22px; }

.viewcube { position: absolute; left: 2465px; top: 36px; width: 72px; height: 70px; overflow: visible; }
.vc { font-family: "Liberation Sans", sans-serif; font-size: 14px; letter-spacing: 0; }
.vc-top { font-size: 13px; fill: #777; text-anchor: middle; }
.vc-y { fill: #8fe08f; }
.vc-x { fill: #f08a8a; }
.vc-z { fill: #8a8af0; }

/* dialogs */
.dialog { position: absolute; top: 130px; background: #f0f0f0; border: 1px solid #d4d4d4; border-bottom-width: 2px; }
.editp { left: 1799px; width: 376px; height: 364px; }
.palette { left: 2181px; width: 374px; height: 678px; }
.dlg-head { height: 37px; display: flex; align-items: center; border-bottom: 2px solid #cfcfcf; padding: 0 6px 0 17px; }
.dlg-min { width: 14px; height: 14px; }
.dlg-title { margin-left: 6px; color: #5e6a75; white-space: nowrap; }
.dlg-more { width: 15px; height: 12px; margin-left: auto; }
.dlg-body { padding-bottom: 1px; }
.frow { height: 45px; display: flex; align-items: center; }
.frow label { width: 132px; padding-left: 19px; flex: none; }
.selbtn { width: 117px; height: 40px; border: 2px solid #dcdcdc; background: #fff; display: flex; align-items: center; padding-left: 9px; font-size: 16px; white-space: nowrap; }
.selbtn.blue { background: #0696d7; border-color: #0696d7; color: #fff; }
.cur { width: 16px; height: 24px; margin-right: 7px; color: #fff; }
.xbtn { width: 14px; height: 14px; margin-left: 16px; }
.sel { width: 193px; height: 40px; border: 2px solid #dcdcdc; background: #fff; display: flex; align-items: center; padding-left: 4px; }
.partial { width: 22px; height: 18px; margin-right: 8px; }
.sel .tri { margin-left: auto; margin-right: 7px; border-left-width: 4.500px; border-right-width: 4.500px; }
.cb { width: 20px; height: 20px; border: 2px solid #555; border-radius: 4px; background: linear-gradient(#f2f2f2, #bdbdbd); flex: none; display: flex; align-items: center; justify-content: center; }
.cb svg { width: 14px; height: 14px; }
.cb-supp { margin-left: 7px; }
.inp { width: 191px; height: 38px; margin-left: 1px; border: 2px solid #dcdcdc; background: #fff; display: flex; align-items: center; padding-left: 2px; position: relative; }
.qtyval { color: #555; }
.caretbar { width: 1.500px; height: 20px; background: #111; margin-left: 0; }
.spin { position: absolute; right: 0; top: 0; bottom: 0; width: 19px; background: #e8e8e8; display: flex; flex-direction: column; justify-content: center; gap: 8px; align-items: center; }
.spin .up { width: 0; height: 0; border-left: 4px solid transparent; border-right: 4px solid transparent; border-bottom: 5px solid #333; }
.spin .dn { width: 0; height: 0; border-left: 4px solid transparent; border-right: 4px solid transparent; border-top: 5px solid #333; }
.dlg-foot { display: flex; align-items: center; gap: 17px; height: 52px; border-top: 2px solid #666; padding: 3px 17px 0 13px; }
.dlg-foot.end { justify-content: flex-end; padding-right: 16px; border-top-color: #777; }
.infoi { width: 19px; height: 20px; margin-right: auto; }
.btn { width: 89px; height: 29px; background: #e8e8e8; border: 2px solid #c4c4c4; font: 16px "Liberation Sans", sans-serif; color: #777; padding: 0; }
.btn.fin { width: 121px; }
.prow { height: 45px; display: flex; align-items: center; }
.prow label { width: 210px; padding-left: 18px; flex: none; white-space: nowrap; margin-right: 18px; }
.prow.opts { padding-left: 15px; }
.opt-tri { width: 0; height: 0; border-left: 6px solid transparent; border-right: 6px solid transparent; border-top: 10px solid #333; margin-right: 11px; }
.lt { width: 66px; height: 24px; margin-left: -3px; }
.la { width: 22px; height: 22px; margin-left: -1px; }

/* in-canvas value box */
.popup { position: absolute; left: 1261px; top: 851px; width: 217px; height: 31px; background: #f0f0f0; display: flex; align-items: center; }
.grip { width: 20px; height: 31px; margin-right: 2px; border-right: 3px solid #ddd; background: repeating-linear-gradient(#d8d8d8 0 2px, #f0f0f0 2px 4px) 8px 0 / 2px 100% no-repeat; }
.popin { width: 105px; height: 29px; background: #fff; border: 2px solid #dcdcdc; display: flex; align-items: center; padding-left: 22px; }
.popin span { background: #ececec; color: #111; line-height: 22px; }
.dots { width: 4px; height: 20px; margin-left: 18px; background: radial-gradient(circle 2px at 2px 2px, #777 98%, transparent) 0 0 / 4px 8px repeat-y; }
.partial2 { width: 23px; height: 18px; margin-left: 21px; }
.popup .tri { margin-left: 5px; border-left-width: 4px; border-right-width: 4px; border-top-width: 6px; }

.navbar { position: absolute; left: 1103px; top: 1203px; width: 356px; height: 36px; background: #f0f0f0; }
.status { position: absolute; right: 28px; top: 1216px; font-weight: bold; color: #333; white-space: nowrap; letter-spacing: .25px; }

/* timeline */
.timeline { height: 68px; flex: none; display: flex; align-items: flex-start; background: #f0f0f0; border-top: 1px solid #d8d8d8; padding-left: 17px; }
.tcontrols { display: flex; align-items: center; gap: 18px; height: 46px; margin-top: 13px; }
.titem { width: 42px; height: 50px; margin-left: 35px; margin-top: 13px; }
.tgear { width: 22px; height: 22px; margin-left: auto; margin-right: 20px; margin-top: 25px; }
```
